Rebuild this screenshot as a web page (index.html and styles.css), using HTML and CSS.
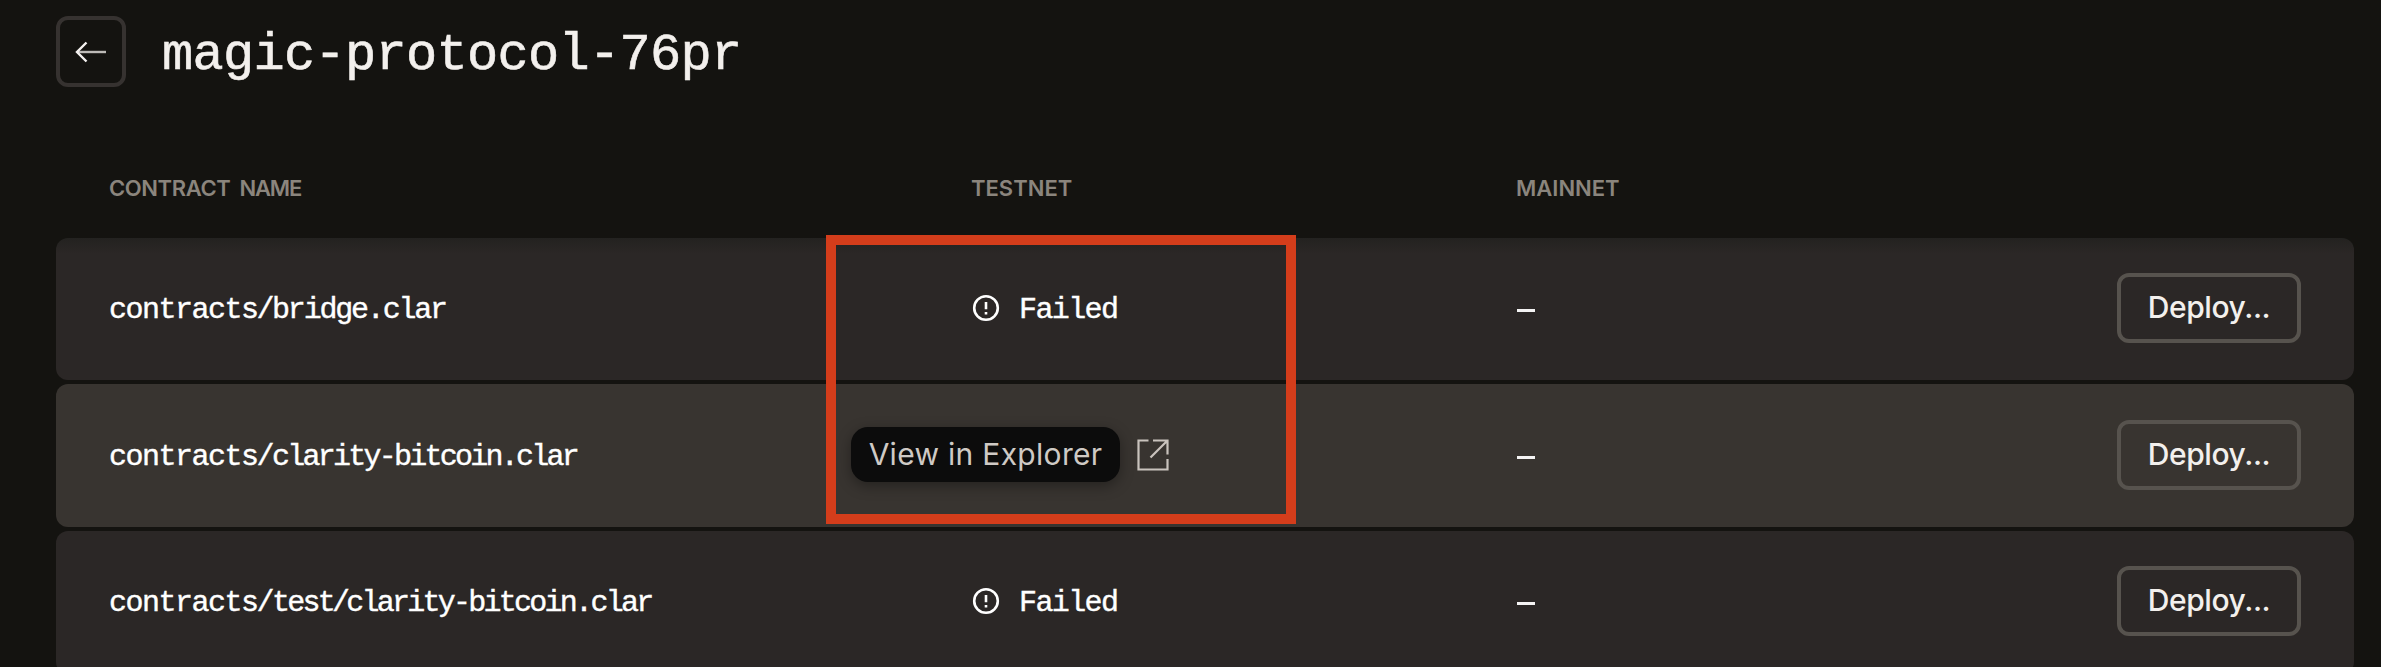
FILE: index.html
```html
<!DOCTYPE html>
<html lang="en">
<head>
<meta charset="utf-8">
<title>magic-protocol-76pr</title>
<link rel="stylesheet" href="styles.css">
</head>
<body>
<svg class="defs" aria-hidden="true">
  <symbol id="alert" viewBox="0 0 28 28">
    <circle cx="14" cy="14" r="11.8" fill="none" stroke="currentColor" stroke-width="2.6"/>
    <path d="M14 8v7.2M14 18v2.4" fill="none" stroke="currentColor" stroke-width="2.6"/>
  </symbol>
</svg>
<main class="page">
  <header class="top">
    <button class="back" aria-label="Back">
      <svg width="32" height="22" viewBox="0 0 32 22"><path d="M2 11H31" fill="none" stroke="#bdbab7" stroke-width="2.4"/><path d="M11.500 1.500L2 11l9.500 9.500" fill="none" stroke="currentColor" stroke-width="2.4"/></svg>
    </button>
    <h1 class="title">magic-protocol-76pr</h1>
  </header>
  <section class="table">
    <div class="cols head">
      <span class="wide">CONTRACT <span class="word">NAME</span></span><span>TESTNET</span><span>MAINNET</span>
    </div>
    <div class="cols row first">
      <span class="name">contracts<span class="slash">/</span><span class="file">bridge.clar</span></span>
      <span class="status"><svg class="alert"><use href="#alert"/></svg><span class="label">Failed</span></span>
      <span class="dash"></span>
      <button class="deploy">Deploy...</button>
    </div>
    <div class="cols row hover">
      <span class="name">contracts<span class="slash">/</span><span class="file long">clarity-bitcoin.clar</span></span>
      <span class="link">
        <span class="tooltip">View in Explorer</span>
        <svg class="external" viewBox="0 0 32 32"><path d="M11.500 1.500H1.500v29h29V20M16 1.500h14.500v14M30.500 1.500L13.500 18.500" fill="none" stroke="currentColor" stroke-width="2.2"/></svg>
      </span>
      <span class="dash"></span>
      <button class="deploy">Deploy...</button>
    </div>
    <div class="cols row last">
      <span class="name">contracts<span class="slash">/</span><span class="file long">test<span class="slash">/</span>clarity-bitcoin.clar</span></span>
      <span class="status"><svg class="alert"><use href="#alert"/></svg><span class="label">Failed</span></span>
      <span class="dash"></span>
      <button class="deploy">Deploy...</button>
    </div>
  </section>
  <div class="annotation"></div>
</main>
</body>
</html>
```
FILE: styles.css
```css
* { box-sizing: border-box; }
body {
  margin: 0;
  background: #141310;
  color: #fff;
  font-family: "Liberation Mono", monospace;
}
.defs { position: absolute; width: 0; height: 0; }
.page {
  position: relative;
  height: 667px;
  overflow: hidden;
  padding: 16px 27px 0 56px;
}
.top { display: flex; align-items: center; gap: 36px; height: 71px; }
.back {
  display: flex;
  align-items: center;
  justify-content: center;
  width: 70px;
  height: 71px;
  padding: 0;
  border: 4px solid #363230;
  border-radius: 12px;
  background: none;
  color: #f5f2f0;
}
.title {
  margin: 0;
  padding-top: 8px;
  font-size: 52px;
  font-weight: 400;
  line-height: 70px;
  letter-spacing: -0.7px;
  color: #f3f0ed;
  -webkit-text-stroke: 0.6px #f3f0ed;
}
.cols {
  display: grid;
  grid-template-columns: 862px 545px 601px 184px;
  align-items: center;
  padding-left: 53px;
}
.head {
  height: 151px;
  padding-top: 50px;
  font: 600 22px/30px Inter, sans-serif;
  color: #8b857d;
}
.wide { letter-spacing: -0.4px; }
.word { margin-left: 4px; letter-spacing: -1.2px; }
.row {
  height: 143px;
  margin-bottom: 4px;
  border-radius: 12px;
  background: #2b2726;
  font-size: 30px;
  -webkit-text-stroke: 0.4px #fff;
}
.row.first {
  height: 142px;
  background: linear-gradient(#232220, #2b2726 16px);
}
.row.hover { background: #383430; }
.row.last { padding-bottom: 2px; }
.name { letter-spacing: -1.5px; padding-top: 2px; }
.file { letter-spacing: -2.2px; }
.file.long { letter-spacing: -2.75px; }
.slash { margin: 0 -1px; }
.status { display: flex; align-items: center; gap: 19px; letter-spacing: -1.6px; }
.label { padding-top: 2px; }
.alert { width: 28px; height: 28px; margin-left: 1px; margin-top: -2px; }
.link { position: relative; display: block; height: 32px; margin-top: -2px; }
.tooltip {
  position: absolute;
  right: 100%;
  top: -12px;
  width: 269px;
  height: 55px;
  margin-right: -149px;
  border-radius: 17px;
  background: #0c0c0c;
  box-shadow: 0 4px 14px rgba(0, 0, 0, 0.35);
  color: #cfcac5;
  font: 400 30px/55px Inter, sans-serif;
  letter-spacing: 0.3px;
  text-align: center;
  white-space: nowrap;
  -webkit-text-stroke: 0;
}
.external { display: block; width: 32px; height: 32px; margin-left: 166px; color: #c9c3bd; }
.dash { width: 18px; height: 3px; margin-top: 3px; margin-left: 1px; background: #f4f3f3; }
.deploy {
  width: 184px;
  height: 70px;
  margin-top: -2px;
  padding: 0 0 2px;
  border: 4px solid #57534e;
  border-radius: 12px;
  background: none;
  color: #f3f0ed;
  font: 500 30px/60px Inter, sans-serif;
  letter-spacing: -0.4px;
  -webkit-text-stroke: 0;
}
.annotation {
  position: absolute;
  left: 826px;
  top: 235px;
  width: 470px;
  height: 289px;
  border: 10px solid #d43d1b;
}
```
